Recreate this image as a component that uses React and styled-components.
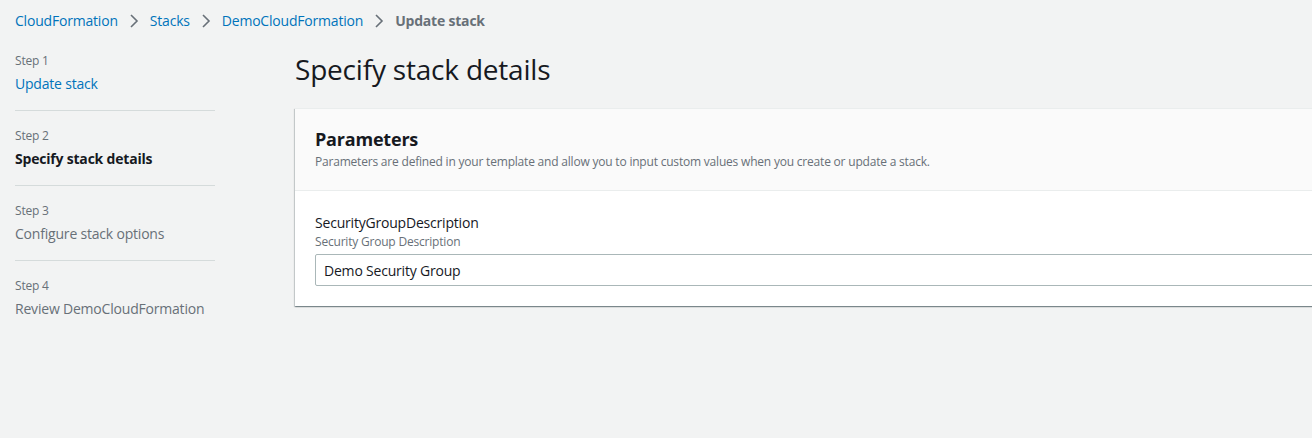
import React from 'react';
import styled, { createGlobalStyle } from 'styled-components';

const GlobalStyle = createGlobalStyle`
    html, body {
        margin: 0;
        padding: 0;
        background: #f2f3f3;
        overflow: hidden;
    }
    body {
        font-family: "Open Sans", "Noto Sans", sans-serif;
        color: #16191f;
        letter-spacing: -0.2px;
        -webkit-font-smoothing: antialiased;
    }
`

const Page = styled.div`
    width: 1312px;
    height: 438px;
    overflow: hidden;
    background: #f2f3f3;
`

const Breadcrumbs = styled.nav`
    display: flex;
    align-items: center;
    padding: 11px 15px 0;
    height: 20px;
    font-size: 14px;
    line-height: 20px;
`

const Crumb = styled.a`
    color: ${p => (p.$current ? '#687078' : '#0073bb')};
    font-weight: ${p => (p.$current ? 700 : 400)};
    text-decoration: none;
    white-space: nowrap;
`

const Chevron = styled.svg`
    width: 16px;
    height: 16px;
    margin: 0 8px 0 8px;
    flex-shrink: 0;
`

const Layout = styled.div`
    display: grid;
    grid-template-columns: 200px 1100px;
    column-gap: 80px;
    padding: 5px 0 0 15px;
`

const Steps = styled.ol`
    list-style: none;
    margin: 0;
    padding: 0;
`

const StepItem = styled.li`
    padding: 17px 0 16px;
    border-top: ${p => (p.$first ? 'none' : '1px solid #d5dbdb')};
`

const StepNumber = styled.div`
    font-size: 12px;
    line-height: 16px;
    color: #687078;
    margin-bottom: 5px;
`

const StepLabel = styled.div`
    font-size: 14px;
    line-height: 20px;
    color: ${p => (p.$state === 'link' ? '#0073bb' : p.$state === 'active' ? '#16191f' : '#687078')};
    font-weight: ${p => (p.$state === 'active' ? 700 : 400)};
`

const Main = styled.main`
    padding-top: 15px;
`

const Heading = styled.h1`
    margin: 0 0 21px;
    font-size: 28px;
    line-height: 36px;
    font-weight: 400;
    color: #16191f;
`

const Panel = styled.section`
    background: #fff;
    box-shadow: 0 1px 1px 0 rgba(0, 28, 36, 0.3), 1px 1px 1px 0 rgba(0, 28, 36, 0.15), -1px 1px 1px 0 rgba(0, 28, 36, 0.15);
    border-top: 1px solid #eaeded;
`

const PanelHeader = styled.header`
    background: #fafafa;
    border-bottom: 1px solid #eaeded;
    padding: 19px 20px 20px;
`

const PanelTitle = styled.h2`
    margin: 0 0 4px;
    font-size: 18px;
    line-height: 22px;
    font-weight: 700;
`

const PanelDescription = styled.p`
    margin: 0;
    font-size: 12px;
    line-height: 16px;
    color: #687078;
`

const PanelBody = styled.div`
    padding: 21px 20px 20px;
`

const FieldLabel = styled.label`
    display: block;
    font-size: 14px;
    line-height: 22px;
    color: #16191f;
`

const FieldHint = styled.div`
    font-size: 12px;
    line-height: 16px;
    color: #687078;
    margin-bottom: 4px;
`

const Input = styled.input`
    display: block;
    box-sizing: border-box;
    width: 100%;
    height: 32px;
    border: 1px solid #aab7b8;
    border-radius: 2px;
    background: #fff;
    padding: 4px 8px;
    font-family: inherit;
    font-size: 14px;
    letter-spacing: -0.2px;
    color: #16191f;
    outline: none;
`

const crumbs = ['CloudFormation', 'Stacks', 'DemoCloudFormation'];

const steps = [
    { n: 'Step 1', label: 'Update stack', state: 'link' },
    { n: 'Step 2', label: 'Specify stack details', state: 'active' },
    { n: 'Step 3', label: 'Configure stack options', state: 'idle' },
    { n: 'Step 4', label: 'Review DemoCloudFormation', state: 'idle' },
];

const Arrow = () => (
    <Chevron viewBox="0 0 16 16" fill="none">
        <path d="M5 2l6 6-6 6" stroke="#687078" strokeWidth="1.6" />
    </Chevron>
);

export default function App() {
    return (
        <Page>
            <GlobalStyle />
            <Breadcrumbs>
                {crumbs.map(c => (
                    <React.Fragment key={c}>
                        <Crumb href="#">{c}</Crumb>
                        <Arrow />
                    </React.Fragment>
                ))}
                <Crumb $current>Update stack</Crumb>
            </Breadcrumbs>
            <Layout>
                <Steps>
                    {steps.map((s, i) => (
                        <StepItem key={s.n} $first={i === 0}>
                            <StepNumber>{s.n}</StepNumber>
                            <StepLabel $state={s.state}>{s.label}</StepLabel>
                        </StepItem>
                    ))}
                </Steps>
                <Main>
                    <Heading>Specify stack details</Heading>
                    <Panel>
                        <PanelHeader>
                            <PanelTitle>Parameters</PanelTitle>
                            <PanelDescription>
                                Parameters are defined in your template and allow you to input custom values when you create or update a stack.
                            </PanelDescription>
                        </PanelHeader>
                        <PanelBody>
                            <FieldLabel htmlFor="sgd">SecurityGroupDescription</FieldLabel>
                            <FieldHint>Security Group Description</FieldHint>
                            <Input id="sgd" defaultValue="Demo Security Group" />
                        </PanelBody>
                    </Panel>
                </Main>
            </Layout>
        </Page>
    );
}
